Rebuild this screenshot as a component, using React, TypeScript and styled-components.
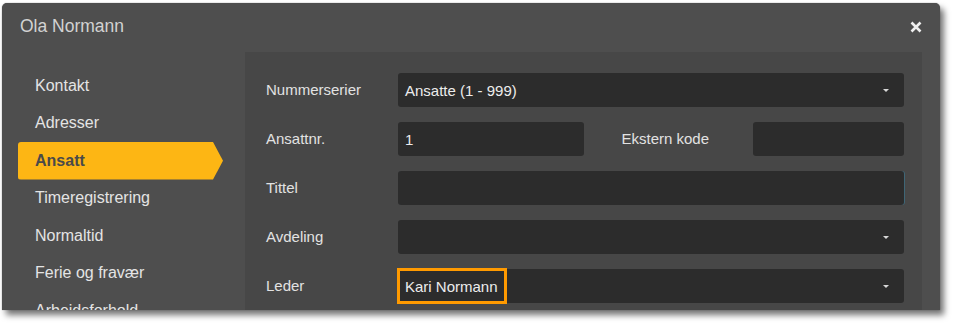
import React from "react";
import styled, { createGlobalStyle } from "styled-components";

const Global = createGlobalStyle`
  html, body { margin: 0; padding: 0; background: #ffffff; }
  body { font-family: "Liberation Sans", Arial, sans-serif; }
  * { box-sizing: border-box; }
`;

const Page = styled.div`
  width: 955px;
  height: 324px;
  padding: 3px 0 0 2px;
  overflow: hidden;
`;

const Dialog = styled.div`
  width: 938px;
  height: 307px;
  background: #4e4e4e;
  border-radius: 5px 5px 0 0;
  box-shadow: 4px 5px 6px rgba(0, 0, 0, 0.55), 0 0 1px rgba(0, 0, 0, 0.6);
  display: flex;
  flex-direction: column;
  overflow: hidden;
`;

const Header = styled.div`
  height: 49px;
  flex: none;
  display: flex;
  align-items: center;
  justify-content: space-between;
  padding: 0 17px 0 18px;
`;

const Title = styled.div`
  font-size: 17.5px;
  color: #d2d2d2;
  margin-top: -2px;
`;

const Close = styled.div`
  width: 14px;
  height: 14px;
  display: flex;
  align-items: center;
  justify-content: center;
  margin-top: -1px;
`;

const Body = styled.div`
  flex: 1;
  display: flex;
  min-height: 0;
  padding-right: 18px;
`;

const Sidebar = styled.nav`
  width: 243px;
  flex: none;
  padding: 15px 0 0 16px;
  display: flex;
  flex-direction: column;
`;

const NavItem = styled.div<{ $active?: boolean }>`
  height: 37.5px;
  flex: none;
  display: flex;
  align-items: center;
  padding-left: 17px;
  font-size: 16px;
  width: ${(p) => (p.$active ? "205px" : "auto")};
  color: ${(p) => (p.$active ? "#4a4a4a" : "#e4e4e4")};
  font-weight: ${(p) => (p.$active ? 700 : 400)};
  background: ${(p) => (p.$active ? "#fdb614" : "transparent")};
  border-radius: ${(p) => (p.$active ? "3px 0 0 3px" : "0")};
  clip-path: ${(p) =>
    p.$active
      ? "polygon(0 0, 195px 0, 205px 50%, 195px 100%, 0 100%)"
      : "none"};
`;

const Panel = styled.div`
  flex: 1;
  background: #474747;
  padding: 21px 18px 0 21px;
  display: flex;
  flex-direction: column;
  gap: 14.7px;
`;

const Row = styled.div`
  display: grid;
  grid-template-columns: 132px 1fr;
  align-items: center;
  height: 34.3px;
`;

const SplitFields = styled.div`
  display: grid;
  grid-template-columns: 186px 1fr 151px;
  align-items: center;
  height: 100%;
`;

const Label = styled.div<{ $inset?: boolean }>`
  font-size: 15px;
  color: #e2e2e2;
  padding-left: ${(p) => (p.$inset ? "37.5px" : "0")};
  margin-top: -1px;
`;

const Field = styled.div<{ $focus?: boolean }>`
  position: relative;
  height: 34.3px;
  background: #2c2c2c;
  border-radius: 3px;
  display: flex;
  align-items: center;
  padding: 0 15px 0 7px;
  font-size: 15px;
  color: #ececec;
  box-shadow: ${(p) => (p.$focus ? "1px 0 0 #3f6676" : "none")};
`;

const Value = styled.span`
  flex: 1;
  white-space: nowrap;
`;

const Caret = styled.span`
  width: 0;
  height: 0;
  border-left: 3px solid transparent;
  border-right: 3px solid transparent;
  border-top: 3px solid #d8d8d8;
  margin-top: 1px;
`;

const Highlight = styled.div`
  position: absolute;
  left: -1px;
  top: -1px;
  width: 110px;
  height: 36px;
  border: 3px solid #ff9a00;
  pointer-events: none;
`;

const navItems = [
  "Kontakt",
  "Adresser",
  "Ansatt",
  "Timeregistrering",
  "Normaltid",
  "Ferie og fravær",
  "Arbeidsforhold",
];

export default function App() {
  return (
    <>
      <Global />
      <Page>
        <Dialog>
          <Header>
            <Title>Ola Normann</Title>
            <Close>
              <svg width="12" height="12" viewBox="0 0 12 12">
                <path
                  d="M1.5 1.5 L10.5 10.5 M10.5 1.5 L1.5 10.5"
                  stroke="#f0f0f0"
                  strokeWidth="2.6"
                  strokeLinecap="butt"
                />
              </svg>
            </Close>
          </Header>
          <Body>
            <Sidebar>
              {navItems.map((n) => (
                <NavItem key={n} $active={n === "Ansatt"}>
                  {n}
                </NavItem>
              ))}
            </Sidebar>
            <Panel>
              <Row>
                <Label>Nummerserier</Label>
                <Field>
                  <Value>Ansatte (1 - 999)</Value>
                  <Caret />
                </Field>
              </Row>
              <Row>
                <Label>Ansattnr.</Label>
                <SplitFields>
                  <Field>
                    <Value>1</Value>
                  </Field>
                  <Label $inset>Ekstern kode</Label>
                  <Field>
                    <Value />
                  </Field>
                </SplitFields>
              </Row>
              <Row>
                <Label>Tittel</Label>
                <Field $focus>
                  <Value />
                </Field>
              </Row>
              <Row>
                <Label>Avdeling</Label>
                <Field>
                  <Value />
                  <Caret />
                </Field>
              </Row>
              <Row>
                <Label>Leder</Label>
                <Field>
                  <Value>Kari Normann</Value>
                  <Caret />
                  <Highlight />
                </Field>
              </Row>
            </Panel>
          </Body>
        </Dialog>
      </Page>
    </>
  );
}
